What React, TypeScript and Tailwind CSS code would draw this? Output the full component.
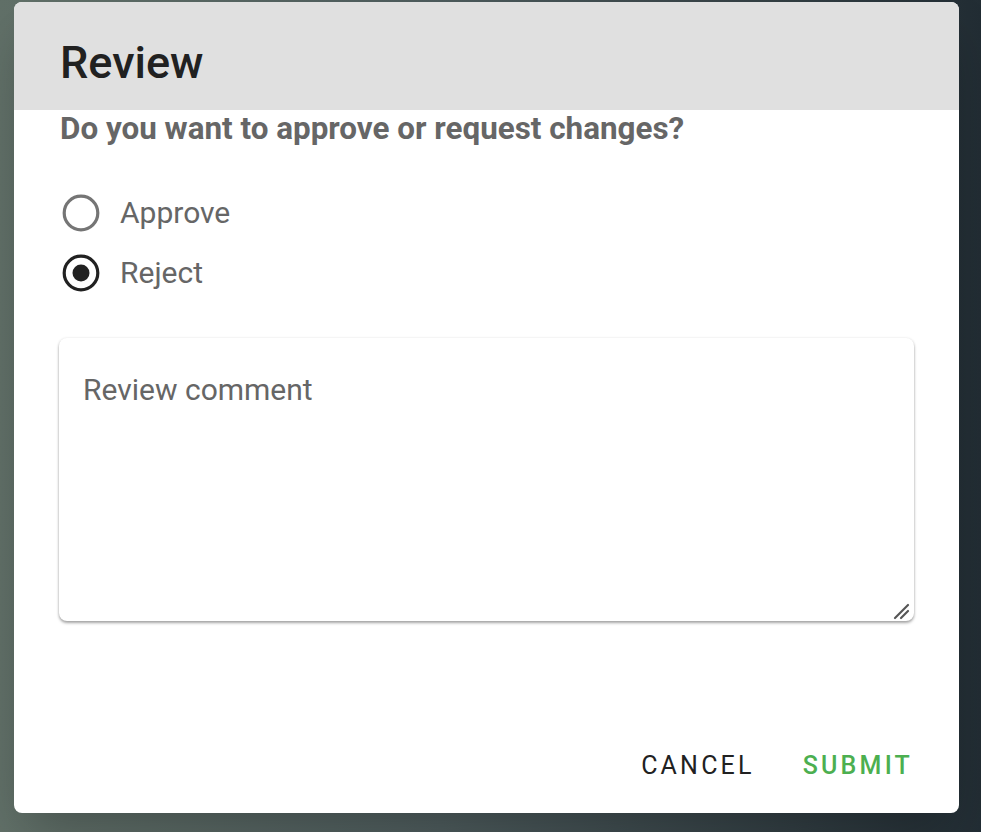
import { useState } from 'react'

function Radio({ checked }: { checked: boolean }) {
  return (
    <svg width="40" height="40" viewBox="0 0 40 40" className="shrink-0">
      <circle cx="20" cy="20" r="16.8" fill="none" strokeWidth="3.2" stroke={checked ? '#212121' : '#757575'} />
      {checked && <circle cx="20" cy="20" r="8.5" fill="#212121" />}
    </svg>
  )
}

export default function App() {
  const [choice, setChoice] = useState<'approve' | 'reject'>('reject')
  const options: { id: 'approve' | 'reject'; label: string }[] = [
    { id: 'approve', label: 'Approve' },
    { id: 'reject', label: 'Reject' },
  ]

  return (
    <div
      className="w-[981px] h-[832px] overflow-hidden bg-[linear-gradient(90deg,#617068_0%,#4d5b5c_45%,#222d34_100%)] pl-[14px] pt-[2px]"
      style={{ fontFamily: 'Roboto, "Noto Sans", sans-serif' }}
    >
      <div className="w-[945px] h-[811px] bg-white rounded-lg shadow-2xl flex flex-col">
        {/* Header */}
        <div className="h-[108px] shrink-0 bg-[#e0e0e0] rounded-t-lg px-[46px] pt-[38px]">
          <h2 className="text-[45px] leading-none font-medium text-[#212121]">Review</h2>
        </div>

        <div className="px-[45px] flex flex-col flex-1">
          <p className="mt-[2px] pl-px text-[31.4px] leading-[34px] font-bold text-[#666666]">
            Do you want to approve or request changes?
          </p>

          <div className="mt-[37px] flex flex-col">
            {options.map(o => (
              <label
                key={o.id}
                className="h-[60px] pl-[2px] flex items-center gap-[19px] cursor-pointer"
                onClick={() => setChoice(o.id)}
              >
                <Radio checked={choice === o.id} />
                <span className="text-[30px] leading-[36px] text-[#666666]">{o.label}</span>
              </label>
            ))}
          </div>

          <div className="relative mt-[35px] w-[855px] h-[283px]">
            <textarea
              placeholder="Review comment"
              className="block w-full h-full resize-none rounded-lg bg-white shadow-[0_2px_3px_rgba(0,0,0,0.35),0_0_3px_rgba(0,0,0,0.08)] pt-[34px] px-[24px] text-[30px] leading-[36px] text-[#333] placeholder:text-[#666666] outline-none"
            />
            <svg width="20" height="20" viewBox="0 0 20 20" className="absolute right-[2px] bottom-[1px] pointer-events-none">
              <path d="M3 18 L16 5" stroke="#555" strokeWidth="2.2" strokeLinecap="round" />
              <path d="M9 18 L16 11" stroke="#555" strokeWidth="2.2" strokeLinecap="round" />
            </svg>
          </div>

          <div className="mt-auto pb-[30px] pr-[1px] flex justify-end items-center gap-[48px]">
            <button className="h-[36px] text-[25px] tracking-[3.2px] text-[#212121]">CANCEL</button>
            <button className="h-[36px] text-[25px] tracking-[3.2px] font-medium text-[#4caf50]">SUBMIT</button>
          </div>
        </div>
      </div>
    </div>
  )
}
